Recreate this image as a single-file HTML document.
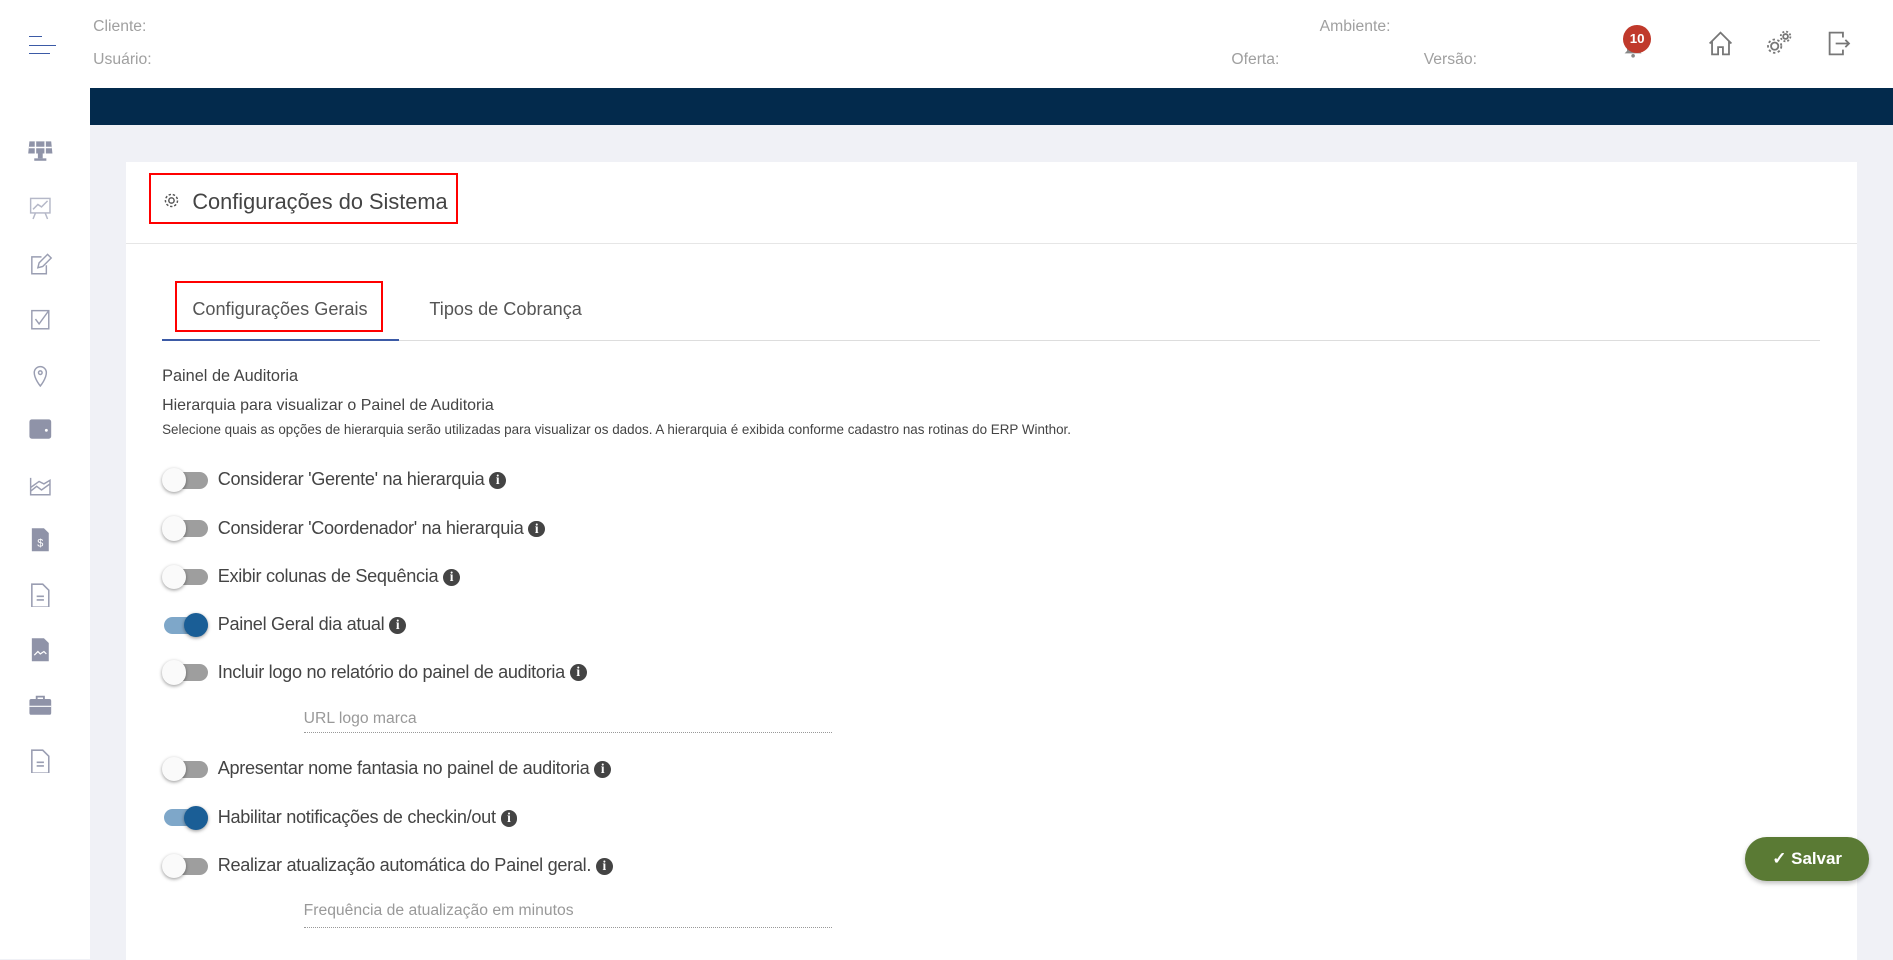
<!DOCTYPE html>
<html><head><meta charset="utf-8">
<style>
html{zoom:1.2096;background:#f0f1f6}
body{margin:0;width:1565px;height:767px;overflow:hidden;background:#f0f1f6;font-family:"Liberation Sans",sans-serif;position:relative}
.a{position:absolute}
.top{left:0;top:0;width:1565px;height:73px;background:#fff}
.hd{color:#a0a0a0;font-size:13px}
.side{left:0;top:73px;width:74px;height:720px;background:#fff}
.dark{left:74px;top:73px;width:1491px;height:30px;background:#032a4c}
.card{left:104px;top:134px;width:1431px;height:660px;background:#fff}
.lbl{font-size:15px;color:#444;white-space:nowrap;letter-spacing:-0.25px}
.tg{width:38px;height:20px}
.tg .tr{position:absolute;left:2px;top:3px;width:36px;height:14px;border-radius:7px;background:#9e9e9e}
.tg .th{position:absolute;left:0;top:0;width:20px;height:20px;border-radius:50%;background:#fafafa;box-shadow:0 1px 3px rgba(0,0,0,.4)}
.tg.on .tr{background:#7ea7c9}
.tg.on .th{left:18px;background:#1a5e96}
.inf{display:inline-block;width:14px;height:14px;border-radius:50%;background:#444;color:#fff;font-size:11px;font-weight:bold;text-align:center;line-height:14px;font-family:"Liberation Serif",serif;vertical-align:1px;margin-left:4px;letter-spacing:0}
.fld{font-size:13px;color:#999}
.dl{height:0;border-bottom:1px dotted #999}
.ic{left:22px;width:22px;height:20px}
</style></head><body>
<div class="a top"></div>
<div class="a side"></div>
<div class="a dark"></div>
<div class="a" style="left:24px;top:30px;width:11px;height:1px;background:#3b5aa6"></div>
<div class="a" style="left:24px;top:37px;width:22px;height:1px;background:#3b5aa6"></div>
<div class="a" style="left:24px;top:44px;width:17px;height:1px;background:#3b5aa6"></div>
<div class="a hd" style="left:77px;top:15px">Cliente:</div>
<div class="a hd" style="left:77px;top:42px">Usuário:</div>
<div class="a hd" style="left:1091px;top:15px">Ambiente:</div>
<div class="a hd" style="left:1018px;top:42px">Oferta:</div>
<div class="a hd" style="left:1177px;top:42px">Versão:</div>
<svg class="a" style="left:1340px;top:28px" width="20" height="20"><path d="M10 4a5 5 0 0 0-5 5v5l-2 2h14l-2-2V9a5 5 0 0 0-5-5z" fill="#888"/><circle cx="10" cy="18" r="1.5" fill="#888"/></svg>
<div class="a" style="left:1342px;top:21px;width:23px;height:23px;border-radius:50%;background:#c0392b;color:#fff;font-size:11px;font-weight:bold;text-align:center;line-height:23px">10</div>
<svg class="a" style="left:1410px;top:24px" width="24" height="24" fill="none" stroke="#777" stroke-width="1.5"><path d="M3 12L12 3l9 9M5 10v11h5v-6h4v6h5V10"/></svg>
<svg class="a" style="left:1459px;top:23px" width="24" height="24" fill="none" stroke="#777" stroke-width="1.5"><circle cx="8" cy="15" r="3"/><circle cx="8" cy="15" r="5.5" stroke-dasharray="2 2"/><circle cx="17" cy="7" r="2"/><circle cx="17" cy="7" r="4" stroke-dasharray="1.6 1.6"/></svg>
<svg class="a" style="left:1510px;top:24px" width="22" height="24" fill="none" stroke="#777" stroke-width="1.5"><path d="M14 7V3H3v18h11v-4M8 12h11M16 9l3 3-3 3"/></svg>
<svg class="a ic" style="top:115px" viewBox="0 0 22 20"><path d="M2 2h18l1 10H1z" fill="#8f93a8"/><path d="M7 2v10M15 2v10M1.5 7h19" stroke="#fff" stroke-width="1.2"/><rect x="9" y="12" width="4" height="4" fill="#8f93a8"/><rect x="6" y="16" width="10" height="2" fill="#8f93a8"/></svg>
<svg class="a ic" style="top:162px" viewBox="0 0 22 20" fill="none" stroke="#b5b8c8" stroke-width="1.2"><rect x="3" y="2" width="16" height="12"/><path d="M5 11l4-4 3 2 5-5M7 14l-2 5M15 14l2 5"/></svg>
<svg class="a ic" style="top:208px" viewBox="0 0 22 20" fill="none" stroke="#9a9eb2" stroke-width="1.2"><path d="M12 4H4v14h12v-7"/><path d="M9 13l1-4 7-7 3 3-7 7z"/></svg>
<svg class="a ic" style="top:254px" viewBox="0 0 22 20" fill="none" stroke="#9a9eb2" stroke-width="1.2"><rect x="4" y="3" width="14" height="15"/><path d="M7 10l3 4 8-11"/></svg>
<svg class="a ic" style="top:300px" viewBox="0 0 22 20" fill="none" stroke="#9a9eb2" stroke-width="1.2"><path d="M11 19s-5-6-5-11a5 5 0 0 1 10 0c0 5-5 11-5 11z"/><circle cx="11" cy="8" r="1.5"/></svg>
<svg class="a ic" style="top:345px" viewBox="0 0 22 20"><rect x="2" y="2" width="18" height="16" rx="2" fill="#8f93a8"/><circle cx="16" cy="11" r="1.2" fill="#fff"/></svg>
<svg class="a ic" style="top:391px" viewBox="0 0 22 20" fill="none" stroke="#9a9eb2" stroke-width="1.2"><path d="M3 4v14h16V6l-5 3-4-2-7 5M3 15l5-4 4 3 7-5"/></svg>
<svg class="a ic" style="top:436px" viewBox="0 0 22 20"><path d="M4 1h10l4 4v15H4z" fill="#8f93a8"/><text x="11" y="16" font-size="9" fill="#fff" text-anchor="middle" font-family="Liberation Sans">$</text></svg>
<svg class="a ic" style="top:482px" viewBox="0 0 22 20" fill="none" stroke="#9a9eb2" stroke-width="1.3"><path d="M4 1h9l5 5v14H4z M8 11h6M8 14h6"/></svg>
<svg class="a ic" style="top:527px" viewBox="0 0 22 20"><path d="M4 1h10l4 4v15H4z" fill="#8f93a8"/><path d="M6 15l3-3 2 2 3-2 2 2" stroke="#fff" fill="none"/></svg>
<svg class="a ic" style="top:573px" viewBox="0 0 22 20"><rect x="2" y="5" width="18" height="13" rx="1.5" fill="#8f93a8"/><path d="M8 5V3h6v2" stroke="#8f93a8" fill="none" stroke-width="1.5"/><path d="M2 11h18" stroke="#fff"/></svg>
<svg class="a ic" style="top:619px" viewBox="0 0 22 20" fill="none" stroke="#9a9eb2" stroke-width="1.3"><path d="M4 1h9l5 5v14H4z M8 11h6M8 14h6"/></svg>

<div class="a card"></div>
<div class="a" style="left:104px;top:201px;width:1431px;height:1px;background:#e6e6e6"></div>
<div class="a" style="left:123px;top:143px;width:252px;height:39px;border:2px solid #f00"></div>
<svg class="a" style="left:135px;top:159px" width="14" height="14" fill="none" stroke="#555" stroke-width="1.2"><circle cx="7" cy="7" r="2.2"/><circle cx="7" cy="7" r="5" stroke-dasharray="2 1.5"/></svg>
<div class="a" style="left:159px;top:156px;font-size:18px;color:#444">Configurações do Sistema</div>
<div class="a" style="left:145px;top:232px;width:168px;height:39px;border:2px solid #f00"></div>
<div class="a" style="left:159px;top:247px;font-size:15px;color:#555">Configurações Gerais</div>
<div class="a" style="left:355px;top:247px;font-size:15px;color:#555">Tipos de Cobrança</div>
<div class="a" style="left:134px;top:281px;width:1371px;height:1px;background:#ddd"></div>
<div class="a" style="left:134px;top:280px;width:196px;height:2px;background:#3b5aa6"></div>
<div class="a" style="left:134px;top:303px;font-size:13.5px;color:#444">Painel de Auditoria</div>
<div class="a" style="left:134px;top:328px;font-size:13.2px;color:#444">Hierarquia para visualizar o Painel de Auditoria</div>
<div class="a" style="left:134px;top:349px;font-size:11.1px;color:#444">Selecione quais as opções de hierarquia serão utilizadas para visualizar os dados. A hierarquia é exibida conforme cadastro nas rotinas do ERP Winthor.</div>

<div class="a tg" style="left:134px;top:387px"><div class="tr"></div><div class="th"></div></div>
<div class="a lbl" style="left:180px;top:388px">Considerar 'Gerente' na hierarquia<span class="inf">i</span></div>
<div class="a tg" style="left:134px;top:427px"><div class="tr"></div><div class="th"></div></div>
<div class="a lbl" style="left:180px;top:428px">Considerar 'Coordenador' na hierarquia<span class="inf">i</span></div>
<div class="a tg" style="left:134px;top:467px"><div class="tr"></div><div class="th"></div></div>
<div class="a lbl" style="left:180px;top:468px">Exibir colunas de Sequência<span class="inf">i</span></div>
<div class="a tg on" style="left:134px;top:507px"><div class="tr"></div><div class="th"></div></div>
<div class="a lbl" style="left:180px;top:508px">Painel Geral dia atual<span class="inf">i</span></div>
<div class="a tg" style="left:134px;top:546px"><div class="tr"></div><div class="th"></div></div>
<div class="a lbl" style="left:180px;top:547px">Incluir logo no relatório do painel de auditoria<span class="inf">i</span></div>
<div class="a fld" style="left:251px;top:587px">URL logo marca</div>
<div class="a dl" style="left:251px;top:605px;width:437px"></div>
<div class="a tg" style="left:134px;top:626px"><div class="tr"></div><div class="th"></div></div>
<div class="a lbl" style="left:180px;top:627px">Apresentar nome fantasia no painel de auditoria<span class="inf">i</span></div>
<div class="a tg on" style="left:134px;top:666px"><div class="tr"></div><div class="th"></div></div>
<div class="a lbl" style="left:180px;top:667px">Habilitar notificações de checkin/out<span class="inf">i</span></div>
<div class="a tg" style="left:134px;top:706px"><div class="tr"></div><div class="th"></div></div>
<div class="a lbl" style="left:180px;top:707px">Realizar atualização automática do Painel geral.<span class="inf">i</span></div>
<div class="a fld" style="left:251px;top:746px">Frequência de atualização em minutos</div>
<div class="a dl" style="left:251px;top:766px;width:437px"></div>

<div class="a" style="left:1443px;top:692px;width:102px;height:36px;border-radius:18px;background:#5a7a34;color:#fff;font-weight:bold;font-size:14px;line-height:36px;text-align:center;box-shadow:0 2px 4px rgba(0,0,0,.25)">✓ Salvar</div>
</body></html>
